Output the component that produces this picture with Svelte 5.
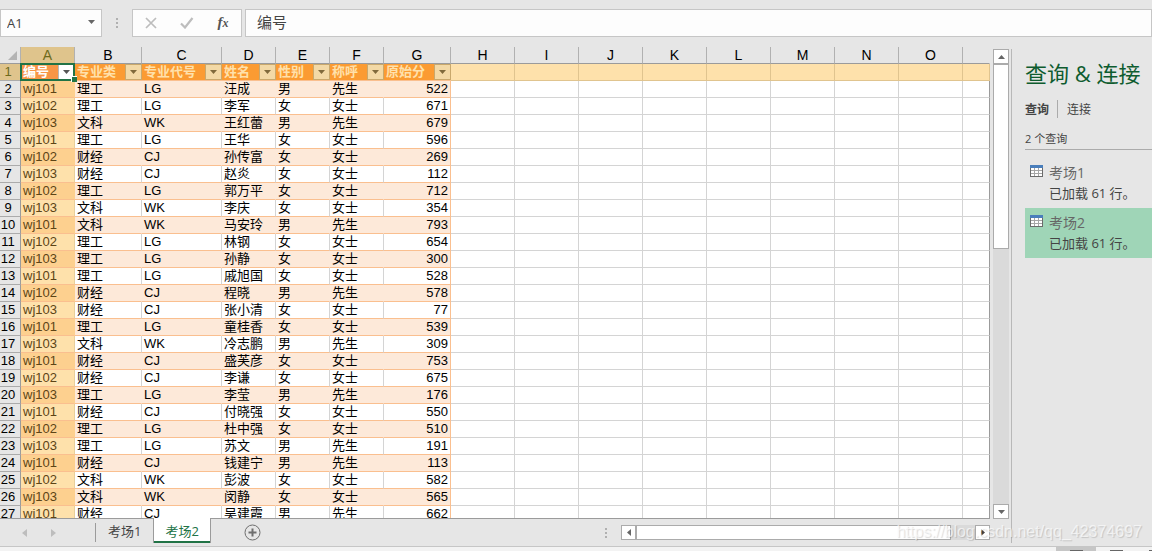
<script>
	const columns = [
		{ letter: 'A', title: '编号', size: 'mid' },
		{ letter: 'B', title: '专业类', size: 'wide' },
		{ letter: 'C', title: '专业代号', size: 'wider' },
		{ letter: 'D', title: '姓名', size: 'mid' },
		{ letter: 'E', title: '性别', size: 'mid' },
		{ letter: 'F', title: '称呼', size: 'mid' },
		{ letter: 'G', title: '原始分', size: 'wide' }
	];
	const emptyColumns = ['H', 'I', 'J', 'K', 'L', 'M', 'N', 'O', ''];

	const rows = [
		['wj101', '理工', 'LG', '汪成', '男', '先生', 522],
		['wj102', '理工', 'LG', '李军', '女', '女士', 671],
		['wj103', '文科', 'WK', '王红蕾', '男', '先生', 679],
		['wj101', '理工', 'LG', '王华', '女', '女士', 596],
		['wj102', '财经', 'CJ', '孙传富', '女', '女士', 269],
		['wj103', '财经', 'CJ', '赵炎', '女', '女士', 112],
		['wj102', '理工', 'LG', '郭万平', '女', '女士', 712],
		['wj103', '文科', 'WK', '李庆', '女', '女士', 354],
		['wj101', '文科', 'WK', '马安玲', '男', '先生', 793],
		['wj102', '理工', 'LG', '林钢', '女', '女士', 654],
		['wj103', '理工', 'LG', '孙静', '女', '女士', 300],
		['wj101', '理工', 'LG', '戚旭国', '女', '女士', 528],
		['wj102', '财经', 'CJ', '程晓', '男', '先生', 578],
		['wj103', '财经', 'CJ', '张小清', '女', '女士', 77],
		['wj101', '理工', 'LG', '童桂香', '女', '女士', 539],
		['wj103', '文科', 'WK', '冷志鹏', '男', '先生', 309],
		['wj101', '财经', 'CJ', '盛芙彦', '女', '女士', 753],
		['wj102', '财经', 'CJ', '李谦', '女', '女士', 675],
		['wj103', '理工', 'LG', '李莹', '男', '先生', 176],
		['wj101', '财经', 'CJ', '付晓强', '女', '女士', 550],
		['wj102', '理工', 'LG', '杜中强', '女', '女士', 510],
		['wj103', '理工', 'LG', '苏文', '男', '先生', 191],
		['wj101', '财经', 'CJ', '钱建宁', '男', '先生', 113],
		['wj102', '文科', 'WK', '彭波', '女', '女士', 582],
		['wj103', '文科', 'WK', '闵静', '女', '女士', 565],
		['wj101', '财经', 'CJ', '吴建霞', '男', '先生', 662]
	];

	const queries = [
		{ name: '考场1', info: '已加载 61 行。' },
		{ name: '考场2', info: '已加载 61 行。' }
	];

	let activeSheet = $state('考场2');
	let activeQuery = $state('考场2');
	let cellName = $state('A1');
	let formula = $state('编号');
</script>

<div class="app">
	<header class="formula-bar">
		<div class="name-box">
			<input aria-label="名称框" bind:value={cellName} />
			<button aria-label="展开名称框">
				<svg width="7" height="4" viewBox="0 0 7 4"><path d="M0 0h7L3.5 4z" fill="#666" /></svg>
			</button>
		</div>
		<span class="dots"><i></i><i></i><i></i></span>
		<div class="fx-box">
			<button aria-label="取消">
				<svg width="12" height="12" viewBox="0 0 12 12">
					<path d="M1 1l10 10M11 1L1 11" stroke="#bdbdbd" stroke-width="1.7" fill="none" />
				</svg>
			</button>
			<button aria-label="输入">
				<svg width="14" height="12" viewBox="0 0 14 12">
					<path d="M1 6.5l4 4L12.5 1" stroke="#bdbdbd" stroke-width="2.2" fill="none" />
				</svg>
			</button>
			<button class="fx" aria-label="插入函数">f<small>x</small></button>
		</div>
		<input class="formula" aria-label="编辑栏" bind:value={formula} />
	</header>

	<main>
		<div class="work">
			<div class="sheet-row">
				<div class="sheet">
					<table>
						<colgroup>
							<col class="num" />
							{#each columns as col}<col class={col.size} />{/each}
							{#each emptyColumns as letter}<col class={letter ? 'std' : ''} />{/each}
						</colgroup>
						<thead>
							<tr class="letters">
								<th class="corner">
									<svg width="9" height="9" viewBox="0 0 9 9"><path d="M9 0v9H0z" fill="#b4b4b4" /></svg>
								</th>
								{#each columns as col}
									<th class:current={col.letter === 'A'}>{col.letter}</th>
								{/each}
								{#each emptyColumns as letter}<th>{letter}</th>{/each}
							</tr>
						</thead>
						<tbody>
							<tr class="titles">
								<th class="row-num current">1</th>
								{#each columns as col}
									<td class="title" class:selected={col.letter === 'A'}>
										<div>
											<span>{col.title}</span>
											<button aria-label={'筛选 ' + col.title}>
												<svg width="7" height="4" viewBox="0 0 7 4"><path d="M0 0h7L3.5 4z" fill="currentColor" /></svg>
											</button>
										</div>
									</td>
								{/each}
								{#each emptyColumns as letter}<td class="empty"></td>{/each}
							</tr>
							{#each rows as row, i}
								<tr class:band={i % 2 === 0}>
									<th class="row-num">{i + 2}</th>
									{#each row as value}<td class="cell">{value}</td>{/each}
									{#each emptyColumns as letter}<td class="empty"></td>{/each}
								</tr>
							{/each}
						</tbody>
					</table>
				</div>
				<div class="scroll vertical">
					<button aria-label="向上滚动">
						<svg width="7" height="4" viewBox="0 0 7 4"><path d="M0 4h7L3.5 0z" fill="#666" /></svg>
					</button>
					<div class="track"><div class="thumb"></div></div>
					<button aria-label="向下滚动">
						<svg width="7" height="4" viewBox="0 0 7 4"><path d="M0 0h7L3.5 4z" fill="#666" /></svg>
					</button>
				</div>
			</div>

			<div class="tab-bar">
				<div class="tab-nav">
					<button aria-label="上一个工作表">
						<svg width="5" height="8" viewBox="0 0 5 8"><path d="M5 0v8L0 4z" fill="#bdbdbd" /></svg>
					</button>
					<button aria-label="下一个工作表">
						<svg width="5" height="8" viewBox="0 0 5 8"><path d="M0 0v8l5-4z" fill="#bdbdbd" /></svg>
					</button>
				</div>
				<div class="tabs">
					{#each queries as query}
						<button class:active={activeSheet === query.name} onclick={() => (activeSheet = query.name)}>
							{query.name}
						</button>
					{/each}
				</div>
				<button class="add" aria-label="新工作表">
					<svg width="17" height="17" viewBox="0 0 17 17" fill="none" stroke="#6e6e6e">
						<circle cx="8.5" cy="8.5" r="7.5" />
						<path d="M4.5 8.5h8M8.5 4.5v8" stroke-width="2" />
					</svg>
				</button>
				<span class="dots"><i></i><i></i><i></i></span>
				<div class="scroll horizontal">
					<button aria-label="向左滚动">
						<svg width="4" height="7" viewBox="0 0 4 7"><path d="M4 0v7L0 3.5z" fill="#666" /></svg>
					</button>
					<div class="track"><div class="thumb"></div></div>
					<button aria-label="向右滚动">
						<svg width="4" height="7" viewBox="0 0 4 7"><path d="M0 0v7l4-3.5z" fill="#444" /></svg>
					</button>
				</div>
			</div>
		</div>

		<aside>
			<h2>查询 &amp; 连接</h2>
			<div class="pane-tabs">
				<button class="active">查询</button>
				<button>连接</button>
			</div>
			<p class="count">2 个查询</p>
			<ul>
				{#each queries as query}
					<li>
						<button class:active={activeQuery === query.name} onclick={() => (activeQuery = query.name)}>
							<svg width="13" height="12" viewBox="0 0 13 12">
								<path d="M0 0h13v12H0z" fill="#6b6b6b" />
								<path d="M1 3h11v8H1z" fill="#fff" />
								<path d="M0 0h13v3H0z" fill="#4a7ebb" />
								<path d="M1 5.5h11M1 8.5h11M4.5 3v8M8.5 3v8" stroke="#a6a6a6" />
							</svg>
							<span class="query-text">
								<span class="name">{query.name}</span>
								<span class="info">{query.info}</span>
							</span>
						</button>
					</li>
				{/each}
			</ul>
		</aside>
	</main>

	<footer>
		<button class="active" aria-label="普通"><i></i></button>
		<button aria-label="页面布局"><i></i></button>
		<button aria-label="分页预览"><i></i></button>
	</footer>
	<div class="watermark">https://blog.csdn.net/qq_42374697</div>
</div>

<style>
	:global(body) {
		margin: 0;
		background: #e6e6e6;
	}

	.app,
	.app * {
		box-sizing: border-box;
	}

	.app {
		position: relative;
		display: flex;
		flex-direction: column;
		height: 100vh;
		overflow: hidden;
		background: #e6e6e6;
		color: #444;
		font-family: 'Open Sans', 'Noto Sans CJK SC', sans-serif;
		font-size: 13px;
	}

	button,
	input {
		margin: 0;
		padding: 0;
		border: none;
		background: none;
		color: inherit;
		font: inherit;
	}

	button {
		display: flex;
		align-items: center;
		justify-content: center;
	}

	svg {
		display: block;
		flex: none;
	}

	/* formula bar */
	.formula-bar {
		display: flex;
		flex: none;
		padding: 9px 0 10px;
	}

	.name-box,
	.fx-box,
	.formula {
		height: 28px;
		border: 1px solid #c6c6c6;
		background: #fdfdfd;
	}

	.name-box {
		display: flex;
		width: 102px;
	}

	.name-box input {
		flex: 1;
		min-width: 0;
		padding-left: 6px;
	}

	.name-box button {
		width: 20px;
		padding-bottom: 2px;
	}

	.dots {
		display: flex;
		flex-direction: column;
		justify-content: center;
		align-items: center;
		gap: 2px;
		width: 30px;
	}

	.dots i {
		width: 2px;
		height: 2px;
		background: #b0b0b0;
	}

	.fx-box {
		display: flex;
		width: 110px;
		margin-right: 3px;
	}

	.fx-box button {
		flex: 1;
	}

	.fx-box .fx {
		align-items: baseline;
		font: italic bold 15px 'Liberation Serif', serif;
		line-height: 24px;
		color: #555;
	}

	.fx small {
		font-size: 12px;
	}

	.formula {
		flex: 1;
		min-width: 0;
		padding: 0 11px 4px;
		font-size: 15px;
	}

	/* layout */
	main {
		display: flex;
		flex: 1;
		min-height: 0;
	}

	.work {
		display: flex;
		flex: 1;
		flex-direction: column;
		min-width: 0;
	}

	.sheet-row {
		display: flex;
		flex: 1;
		gap: 3px;
		min-height: 0;
		padding-right: 2px;
	}

	.sheet {
		flex: 1;
		min-width: 0;
		overflow: hidden;
		border-bottom: 1px solid #9b9b9b;
	}

	/* grid */
	table {
		width: 100%;
		table-layout: fixed;
		border-spacing: 0;
		font-family: 'Liberation Sans', 'Noto Sans CJK SC', sans-serif;
		color: #000;
	}

	.num {
		width: 21px;
	}

	.mid {
		width: 54px;
	}

	.wide {
		width: 67px;
	}

	.wider {
		width: 80px;
	}

	.std {
		width: 64px;
	}

	th,
	td {
		height: 17px;
		padding: 0;
		line-height: 16px;
		font-weight: normal;
		white-space: nowrap;
	}

	.letters th {
		border-right: 1px solid #b1b1b1;
		border-bottom: 1px solid #9b9b9b;
		font-size: 14px;
	}

	.letters th:last-child {
		border-right-color: transparent;
	}

	.letters .corner svg {
		margin-left: 8px;
	}

	.letters .current,
	.row-num.current {
		background: #dfc48c;
		color: #6d6a1c;
	}

	.row-num {
		padding-right: 4px;
		border-right: 1px solid #9b9b9b;
		border-bottom: 1px solid #ababab;
		background: #e6e6e6;
		text-align: center;
	}

	.empty {
		border-right: 1px solid #d4d4d4;
		border-bottom: 1px solid #d4d4d4;
		background: #fff;
	}

	.empty:last-child {
		border-right-color: #9b9b9b;
	}

	.titles .empty {
		border-color: #e0c48f;
		background: #fee1ab;
	}

	.title {
		position: relative;
		background: #fb9b32;
		border-bottom: 1px solid #fabf8f;
		color: #ffe1ab;
		font-weight: bold;
	}

	.title div {
		display: flex;
		justify-content: space-between;
		height: 16px;
		padding-left: 2px;
	}

	.title button {
		width: 17px;
		height: 16px;
		border: 1px solid #c9a86c;
		background: #f3d9a6;
		color: #806a3c;
	}

	.title.selected {
		background: #f79646;
		color: #fff;
	}

	.title.selected button {
		border-color: #b8b8b8;
		background: #fff;
		color: #555;
	}

	/* selection frame and its fill handle */
	.title.selected::before {
		content: '';
		position: absolute;
		inset: -1px 0 -1px -1px;
		border: 2px solid #217346;
	}

	.title.selected::after {
		content: '';
		position: absolute;
		right: -2px;
		bottom: -2px;
		z-index: 1;
		width: 5px;
		height: 5px;
		border: solid #fff;
		border-width: 1px 0 0 1px;
		background: #217346;
	}

	.cell {
		padding-left: 2px;
		border-right: 1px solid #d4d4d4;
		border-bottom: 1px solid #fabf8f;
		background: #fff;
	}

	.band .cell {
		border-right-color: #fde9d9;
		background: #fde9d9;
	}

	.cell:nth-child(2) {
		border-right-color: #e8cf9c;
		background: #fee1ab;
		color: #5c4416;
	}

	.band .cell:nth-child(2) {
		border-right-color: #fdd08f;
		background: #fdd08f;
	}

	.cell:nth-child(8),
	.band .cell:nth-child(8) {
		padding-right: 2px;
		border-right-color: #fabf8f;
		text-align: right;
	}

	/* scrollbars */
	.scroll {
		display: flex;
		flex: none;
	}

	.scroll button,
	.thumb {
		flex: none;
		border: 1px solid #ababab;
		background: #fff;
	}

	.track {
		flex: 1;
		background: #dadada;
	}

	.vertical {
		flex-direction: column;
		width: 16px;
		padding-top: 2px;
	}

	.vertical button {
		height: 15px;
	}

	.vertical .thumb {
		height: 42%;
	}

	.horizontal {
		width: 369px;
		height: 15px;
	}

	.horizontal button {
		width: 15px;
	}

	.horizontal .thumb {
		width: 93%;
		height: 100%;
	}

	/* sheet tabs */
	.tab-bar {
		display: flex;
		flex: none;
		align-items: center;
		height: 27px;
		padding-right: 21px;
	}

	.tab-nav {
		display: flex;
		justify-content: center;
		gap: 24px;
		width: 96px;
		height: 19px;
		padding-right: 18px;
		border-right: 1px solid #9b9b9b;
	}

	.tabs {
		display: flex;
		align-self: flex-start;
	}

	.tabs button {
		height: 24px;
		padding: 0 12px 2px;
	}

	.tabs .active {
		margin-top: -1px;
		height: 25px;
		padding: 0 11px 1px;
		border: solid #9b9b9b;
		border-width: 0 1px;
		box-shadow: inset 0 -2px #217346;
		background: #fff;
		color: #217346;
	}

	.add {
		margin: 0 auto 0 33px;
	}

	/* queries pane */
	aside {
		flex: none;
		width: 141px;
		margin: 2px 0 3px;
		padding: 8px 0 0 13px;
		border-left: 1px solid #b8b8b8;
	}

	h2 {
		margin: 0;
		font-size: 22px;
		font-weight: normal;
		line-height: 32px;
		white-space: nowrap;
		color: #0e5c2f;
	}

	.pane-tabs {
		display: flex;
		height: 18px;
		margin-top: 11px;
		font-size: 12px;
	}

	.pane-tabs button + button {
		margin-left: 8px;
		padding-left: 9px;
		border-left: 1px solid #ababab;
	}

	.pane-tabs .active {
		font-weight: bold;
	}

	.count {
		margin: 10px 0 8px;
		border-bottom: 1px solid #ababab;
		font-size: 11px;
		line-height: 21px;
	}

	ul {
		margin: 0;
		padding: 0;
		list-style: none;
	}

	li button {
		align-items: flex-start;
		justify-content: flex-start;
		gap: 6px;
		width: 100%;
		height: 50px;
		padding: 4px 0 0 5px;
		text-align: left;
	}

	li svg {
		margin-top: 3px;
	}

	li .active {
		background: #9fd5b7;
	}

	.query-text {
		display: flex;
		flex-direction: column;
		line-height: 21px;
		white-space: nowrap;
	}

	.name {
		font-size: 14px;
		color: #666;
	}

	/* status bar */
	footer {
		display: flex;
		flex: none;
		justify-content: flex-end;
		height: 5px;
		overflow: hidden;
		border-top: 1px solid #c6c6c6;
		background: #f3f3f3;
	}

	footer button {
		align-items: flex-start;
		flex: none;
		width: 40px;
		height: 22px;
		padding-top: 3px;
	}

	footer button:last-child {
		justify-content: flex-end;
		width: 16px;
	}

	footer .active {
		background: #c6c6c6;
	}

	footer i {
		width: 13px;
		height: 12px;
		border: 1px solid #666;
	}

	footer button:last-child i {
		width: 3px;
	}

	.watermark {
		position: absolute;
		right: 10px;
		bottom: 8px;
		font-family: 'Liberation Sans', sans-serif;
		font-size: 16px;
		line-height: 22px;
		color: rgba(255, 255, 255, 0.65);
		text-shadow: 1px 1px 1px rgba(0, 0, 0, 0.15);
		pointer-events: none;
	}
</style>
